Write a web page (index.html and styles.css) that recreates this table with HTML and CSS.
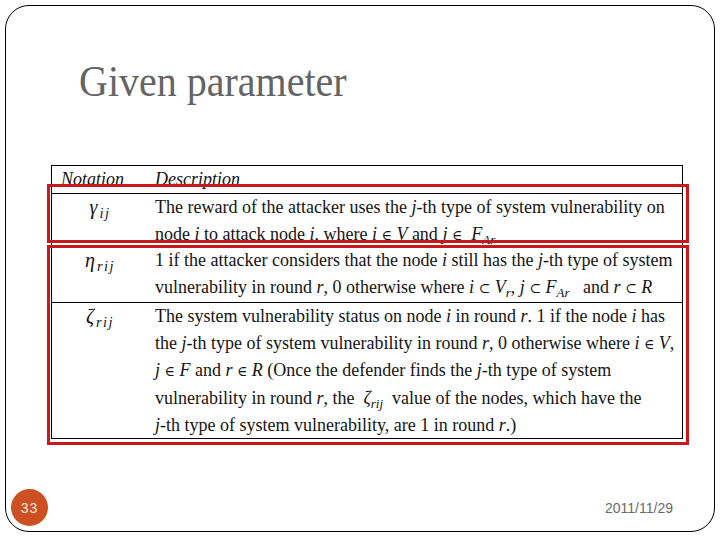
FILE: index.html
```html
<!DOCTYPE html>
<html lang="en">
<head>
<meta charset="utf-8">
<title>Given parameter</title>
<link rel="stylesheet" href="styles.css">
</head>
<body>
<div class="slide">
  <h1 class="title">Given parameter</h1>

  <div class="tbl-wrap">
    <div class="tbl">
      <div class="row head">
        <div class="nota-h">Notation</div>
        <div class="desc">Description</div>
      </div>
      <div class="row r1">
        <div class="sym"><i>γ</i><sub>ij</sub></div>
        <div class="desc">The reward of the attacker uses the <i>j</i>-th type of system vulnerability on<br>node <i>i</i> to attack node <i>i</i>, where <i>i</i> <span class="op">∈</span> <i>V</i> and <i>j</i> <span class="op">∈</span> &nbsp;<i>F</i><sub><i>Ar</i></sub></div>
      </div>
      <div class="row r2">
        <div class="sym"><i>η</i><sub>rij</sub></div>
        <div class="desc">1 if the attacker considers that the node <i>i</i> still has the <i>j</i>-th type of system<br>vulnerability in round <i>r</i>, 0 otherwise where <i>i</i> <span class="op">⊂</span> <i>V</i><sub><i>r</i></sub>, <i>j</i> <span class="op">⊂</span> <i>F</i><sub><i>Ar</i></sub> &nbsp; and <i>r</i> <span class="op">⊂</span> <i>R</i></div>
      </div>
      <div class="row r3">
        <div class="sym"><i>ζ</i><sub>rij</sub></div>
        <div class="desc">The system vulnerability status on node <i>i</i> in round <i>r</i>. 1 if the node <i>i</i> has<br>the <i>j</i>-th type of system vulnerability in round <i>r</i>, 0 otherwise where <i>i</i> <span class="op">∈</span> <i>V</i>,<br><i>j</i> <span class="op">∈</span> <i>F</i> and <i>r</i> <span class="op">∈</span> <i>R</i> (Once the defender finds the <i>j</i>-th type of system<br>vulnerability in round <i>r</i>, the &nbsp;<i>ζ</i><sub><i>rij</i></sub> &nbsp;value of the nodes, which have the<br><i>j</i>-th type of system vulnerability, are 1 in round <i>r</i>.)</div>
      </div>
    </div>
    <div class="hl hl-1"></div>
    <div class="hl hl-2"></div>
  </div>

  <div class="footer">
    <div class="pagenum">33</div>
    <div class="date">2011/11/29</div>
  </div>
</div>
</body>
</html>
```

FILE: styles.css
```css
html, body {
  margin: 0;
  padding: 0;
  background: #ffffff;
}

.slide {
  box-sizing: border-box;
  width: 710px;
  height: 527px;
  margin: 5px 0 0 5px;
  border: 1px solid #000;
  border-radius: 24px;
  display: flex;
  flex-direction: column;
}

.title {
  margin: 52px 0 0 73px;
  font-family: "Liberation Serif", "Times New Roman", serif;
  font-weight: normal;
  font-size: 40px;
  line-height: 50px;
  color: #646464;
  transform: scaleY(1.1);
  transform-origin: 0 38px;
}

.tbl-wrap {
  position: relative;
  margin: 57px 0 0 45px;
  width: 632px;
}

.tbl {
  box-sizing: border-box;
  width: 632px;
  border: 1px solid #000;
  font-family: "Liberation Serif", "Times New Roman", serif;
  font-size: 18px;
  line-height: 27px;
  color: #141414;
}

.row {
  display: flex;
  overflow: visible;
}

.row + .row {
  border-top: 1px solid #000;
}

.head { height: 27px; font-style: italic; }
.r1 { height: 52px; }
.r2 { height: 55px; }
.r3 { height: 135px; line-height: 26.7px; }

.nota-h {
  width: 96px;
  box-sizing: border-box;
  padding-left: 9px;
}

.sym {
  width: 96px;
  flex: none;
  text-align: center;
  font-size: 20px;
}

.desc {
  padding-left: 7px;
  white-space: nowrap;
}

.op {
  font-family: "DejaVu Serif", serif;
  font-size: 14px;
}

sub {
  font-size: 0.72em;
  line-height: 0;
  vertical-align: -0.28em;
}

.sym sub {
  font-style: italic;
  letter-spacing: 1.5px;
  margin-left: 2px;
}

.hl {
  position: absolute;
  box-sizing: border-box;
  border: 3px solid #c8171d;
  left: -4px;
  width: 642px;
}

.hl-1 { top: 19px; height: 59px; }
.hl-2 { top: 80px; height: 200px; }

.footer {
  margin-top: auto;
  padding: 0 41px 5px 5px;
  display: flex;
  align-items: center;
  justify-content: space-between;
  font-family: "Liberation Sans", Arial, sans-serif;
  font-size: 14px;
}

.pagenum {
  width: 37px;
  height: 37px;
  border-radius: 50%;
  background: #cc5022;
  color: #f8e8dc;
  display: flex;
  align-items: center;
  justify-content: center;
  letter-spacing: 1px;
}

.date {
  color: #6a6a6a;
}
```
